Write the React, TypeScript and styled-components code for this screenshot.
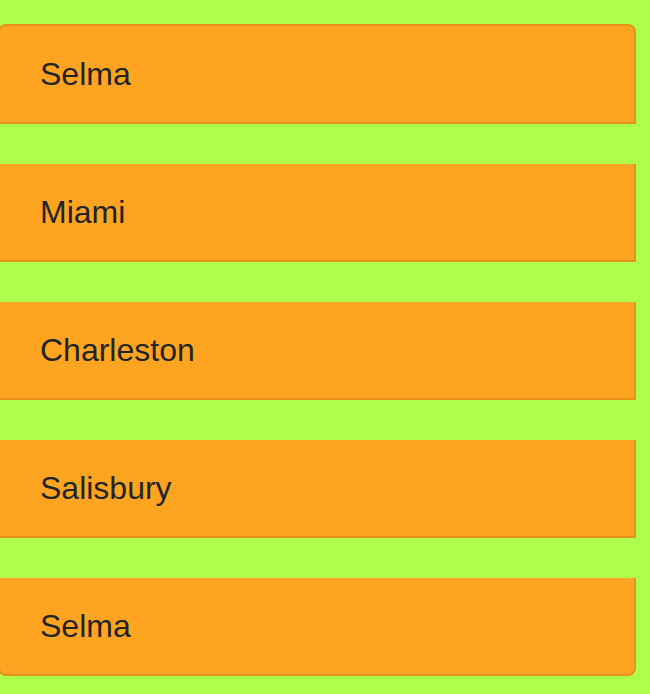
import React from "react";
import styled, { createGlobalStyle } from "styled-components";

const GlobalStyle = createGlobalStyle`
  html, body {
    margin: 0;
    padding: 0;
    background: #adff4b;
  }
  body {
    font-family: "Liberation Sans", Arial, sans-serif;
    overflow: hidden;
  }
`;

const Page = styled.div`
  padding-top: 24px;
  width: 638px;
  margin-left: -2px;
`;

const List = styled.ul`
  list-style: none;
  margin: 0;
  padding: 0;
  display: flex;
  flex-direction: column;
  gap: 40px;
`;

const Item = styled.li<{ $first: boolean; $last: boolean }>`
  background: #ffa420;
  border: 2px solid #e8921c;
  border-top-width: ${(p) => (p.$first ? "2px" : "0")};
  border-radius: ${(p) =>
    p.$first ? "8px 8px 0 0" : p.$last ? "0 0 8px 8px" : "0"};
  padding: 24px 40px;
  font-size: 32px;
  line-height: 48px;
  color: #212529;
`;

const cities = ["Selma", "Miami", "Charleston", "Salisbury", "Selma"];

export default function App() {
  return (
    <>
      <GlobalStyle />
      <Page>
        <List>
          {cities.map((c, i) => (
            <Item key={i} $first={i === 0} $last={i === cities.length - 1}>
              {c}
            </Item>
          ))}
        </List>
      </Page>
    </>
  );
}
